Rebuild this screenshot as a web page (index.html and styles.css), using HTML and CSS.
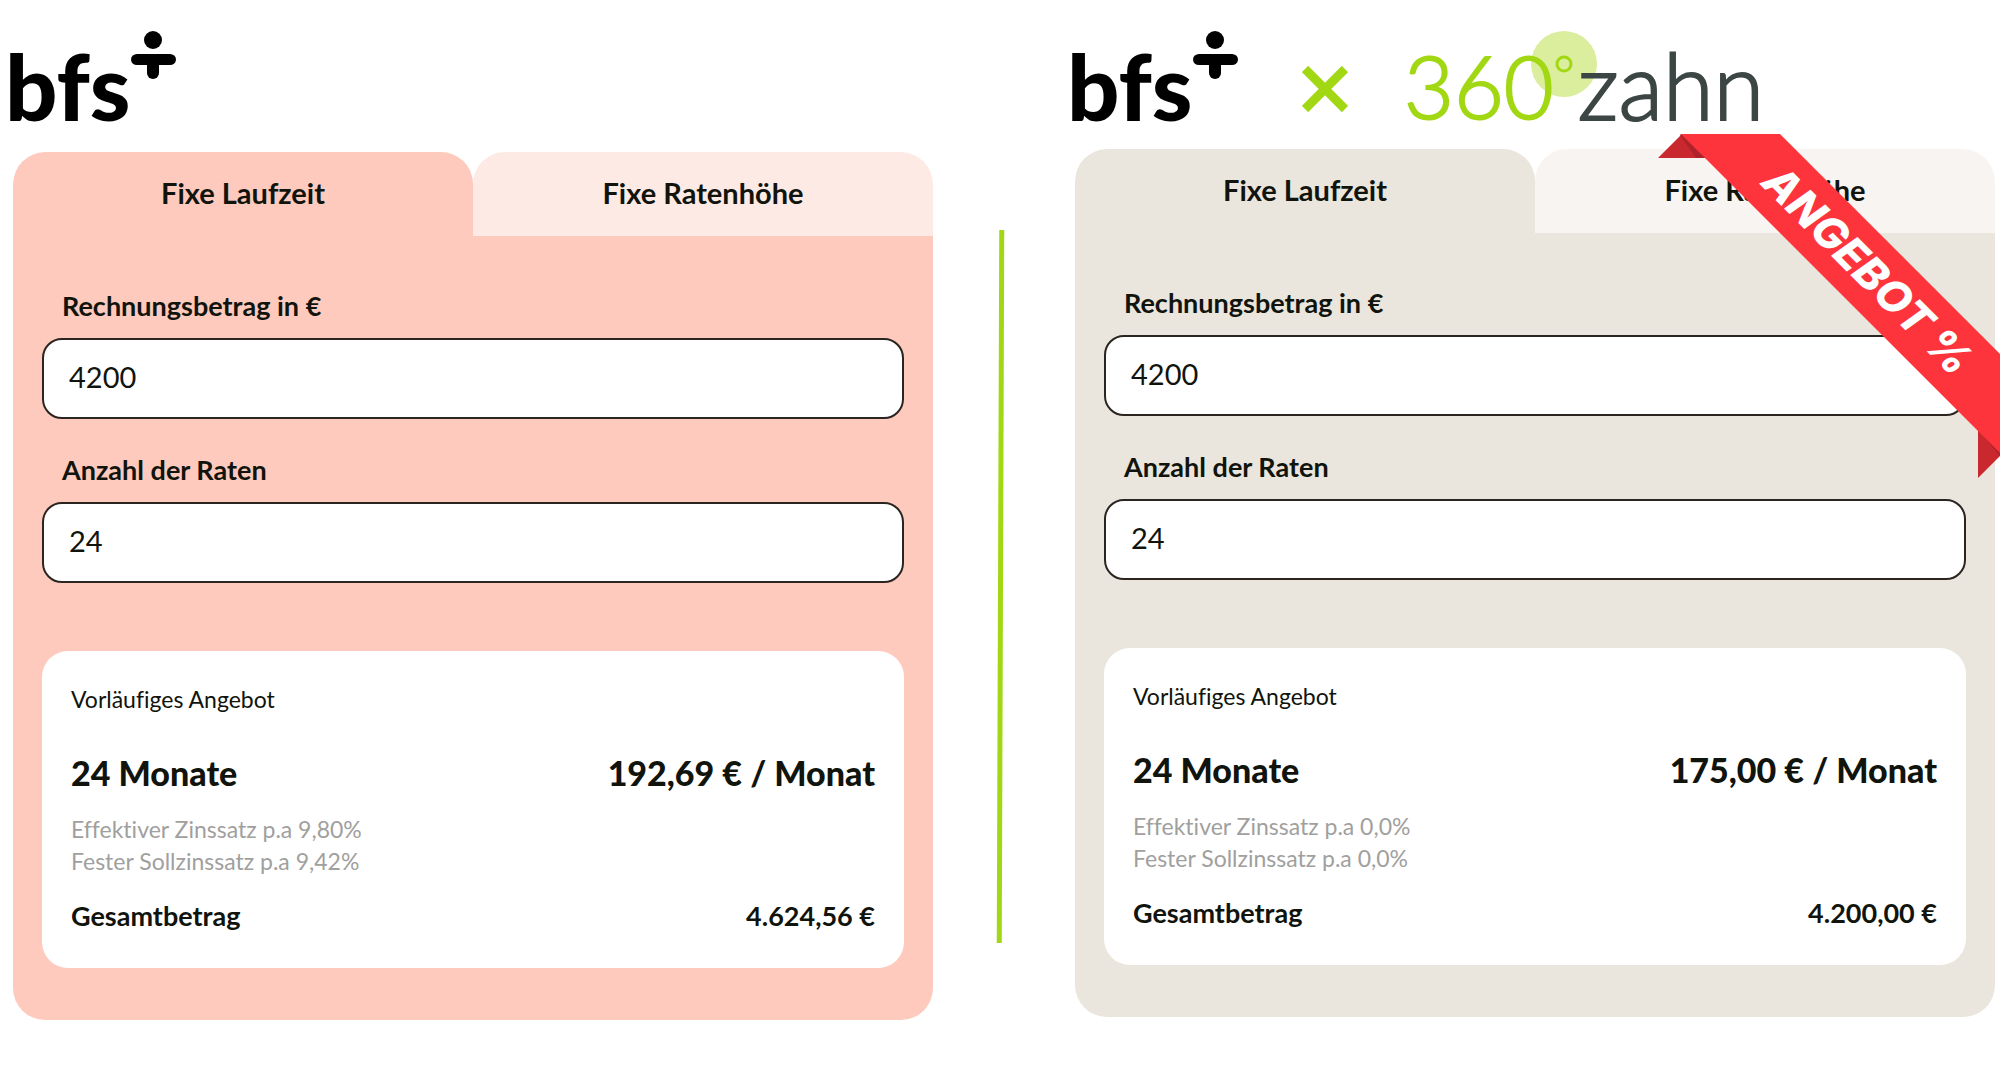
FILE: index.html
```html
<!DOCTYPE html>
<html lang="de">
<head>
  <meta charset="UTF-8">
  <meta name="viewport" content="width=device-width, initial-scale=1.0">
  <title>bfs × 360° zahn</title>
  <link rel="stylesheet" href="styles.css">
</head>
<body>

<main class="compare">
  <!-- Standard offer -->
  <section class="column">
    <header class="brands">
      <div class="bfs">
        <span class="bfs-name">bfs</span>
        <svg class="bfs-plus" width="46" height="50" viewBox="0 0 46 50" aria-hidden="true">
          <circle cx="22" cy="9" r="9"/>
          <rect x="0" y="23" width="45" height="11" rx="6"/>
          <rect x="16" y="26" width="12" height="22" rx="6"/>
        </svg>
      </div>
    </header>

    <div class="card card-peach">
      <div class="tabs">
        <button type="button" class="tab active">Fixe Laufzeit</button>
        <button type="button" class="tab">Fixe Ratenhöhe</button>
      </div>
      <form class="calculator">
        <label for="amount">Rechnungsbetrag in €</label>
        <input type="text" id="amount" value="4200">
        <label for="rates">Anzahl der Raten</label>
        <input type="text" id="rates" value="24">
        <div class="offer">
          <p class="note">Vorläufiges Angebot</p>
          <div class="row headline">
            <span>24 Monate</span>
            <span>192,69 € / Monat</span>
          </div>
          <p class="interest">Effektiver Zinssatz p.a 9,80%<br>Fester Sollzinssatz p.a 9,42%</p>
          <div class="row total">
            <span>Gesamtbetrag</span>
            <span>4.624,56 €</span>
          </div>
        </div>
      </form>
    </div>
  </section>

  <div class="divider"></div>

  <!-- Partner offer -->
  <section class="column partner">
    <header class="brands">
      <div class="bfs">
        <span class="bfs-name">bfs</span>
        <svg class="bfs-plus" width="46" height="50" viewBox="0 0 46 50" aria-hidden="true">
          <circle cx="22" cy="9" r="9"/>
          <rect x="0" y="23" width="45" height="11" rx="6"/>
          <rect x="16" y="26" width="12" height="22" rx="6"/>
        </svg>
      </div>
      <svg class="times" width="46" height="46" viewBox="0 0 46 46" aria-hidden="true">
        <path d="M3 3 L43 43 M43 3 L3 43"/>
      </svg>
      <div class="zahn">
        <svg class="degree" width="66" height="66" viewBox="0 0 66 66" aria-hidden="true">
          <circle class="halo" cx="33" cy="33" r="33"/>
          <circle class="ring" cx="33" cy="33" r="7"/>
        </svg>
        <span class="zahn-number">360</span>
        <span class="zahn-name">zahn</span>
      </div>
    </header>

    <div class="card card-sand">
      <div class="tabs">
        <button type="button" class="tab active">Fixe Laufzeit</button>
        <button type="button" class="tab">Fixe Ratenhöhe</button>
      </div>
      <form class="calculator">
        <label for="partner-amount">Rechnungsbetrag in €</label>
        <input type="text" id="partner-amount" value="4200">
        <label for="partner-rates">Anzahl der Raten</label>
        <input type="text" id="partner-rates" value="24">
        <div class="offer">
          <p class="note">Vorläufiges Angebot</p>
          <div class="row headline">
            <span>24 Monate</span>
            <span>175,00 € / Monat</span>
          </div>
          <p class="interest">Effektiver Zinssatz p.a 0,0%<br>Fester Sollzinssatz p.a 0,0%</p>
          <div class="row total">
            <span>Gesamtbetrag</span>
            <span>4.200,00 €</span>
          </div>
        </div>
      </form>
    </div>

    <svg class="ribbon" width="342" height="344" viewBox="0 0 342 344">
      <path class="fold" d="M0 24 L24 0 L48 24 Z M320 296 L342 318 V322 L320 344 Z"/>
      <path class="fold-dark" d="M23 0 L48 24 H38 L22 1 Z M320 296 L342 318 L342 322 Z"/>
      <path class="band" d="M23 0 H122 L342 220 V319 Z"/>
      <text x="0" y="16" text-anchor="middle" transform="translate(210 136) rotate(45)">ANGEBOT %</text>
    </svg>
  </section>
</main>

</body>
</html>
```
FILE: styles.css
```css
* { margin: 0; padding: 0; box-sizing: border-box; font-family: 'Lato', sans-serif; }
body { background: #fff; color: #11140c; overflow-x: hidden; font-variant-ligatures: none; }
p, label, .row { line-height: 32px; }

.compare { display: grid; grid-template-columns: 1fr 142px 1fr; padding: 0 5px 0 13px; }
.column { position: relative; }
.divider { width: 5px; margin: 230px auto 77px 65px; background: #a2d813; transform: rotate(0.2deg); }

/* Logos */
.brands { height: 152px; display: flex; align-items: flex-start; margin-left: -8px; padding-top: 31px; }
.partner .brands { height: 149px; }
.bfs { display: flex; width: 168px; color: #000; }
.bfs-name { font-size: 92px; line-height: 110px; font-weight: 900; }
.bfs-plus { flex: none; }
.times { margin: 35px 0 0 67px; stroke: #a2d813; stroke-width: 9; }
.zahn { position: relative; display: flex; margin-left: 56px; font-size: 86px; line-height: 110px; font-weight: 300; -webkit-text-stroke: 2px currentColor; }
.zahn-number { position: relative; color: #a2d813; }
.zahn-name { position: relative; margin-left: 24px; color: #3c4644; font-size: 92px; line-height: 108px; }
.degree { position: absolute; left: 127px; top: 0; }
.halo { fill: #dbee9d; }
.ring { fill: none; stroke: #a2d813; stroke-width: 3; }

/* Calculator */
.card { border-radius: 32px; overflow: hidden; }
.tabs { display: flex; }
.tab { flex: 1; height: 84px; padding-bottom: 3px; border: none; border-radius: 32px 32px 0 0; background: none; color: inherit; font-size: 29px; font-weight: 700; cursor: pointer; }
.card-peach .calculator, .card-peach .active { background: #fecabd; }
.card-peach .tab:not(.active) { background: #feeae4; }
.card-sand .calculator, .card-sand .active { background: #eae5dd; }
.card-sand .tab:not(.active) { background: #f8f4f1; }
.calculator { padding: 54px 29px 52px; }
.calculator label { display: block; margin: 0 20px 16px; font-size: 27px; font-weight: 700; }
.calculator input { display: block; width: 100%; height: 81px; margin-bottom: 35px; padding: 0 25px 4px; border: 2px solid #2a2520; border-radius: 20px; background: #fff; color: #11140c; font-size: 29px; }

.offer { margin-top: 68px; padding: 32px 29px 36px; border-radius: 26px; background: #fff; }
.row { display: flex; justify-content: space-between; }
.note { font-size: 23px; }
.headline { margin: 38px 0 20px; font-size: 34px; line-height: 40px; font-weight: 900; }
.interest { margin-bottom: 23px; color: #a0a09e; font-size: 23px; }
.total { font-size: 27px; font-weight: 700; }

/* Ribbon */
.ribbon { position: absolute; top: 134px; right: -5px; }
.band { fill: #fd343c; }
.fold { fill: #c9282f; }
.fold-dark { fill: #ad222b; }
.ribbon text { fill: #fff; font-family: 'Inter', sans-serif; font-size: 44px; font-weight: 800; font-style: italic; }
```
